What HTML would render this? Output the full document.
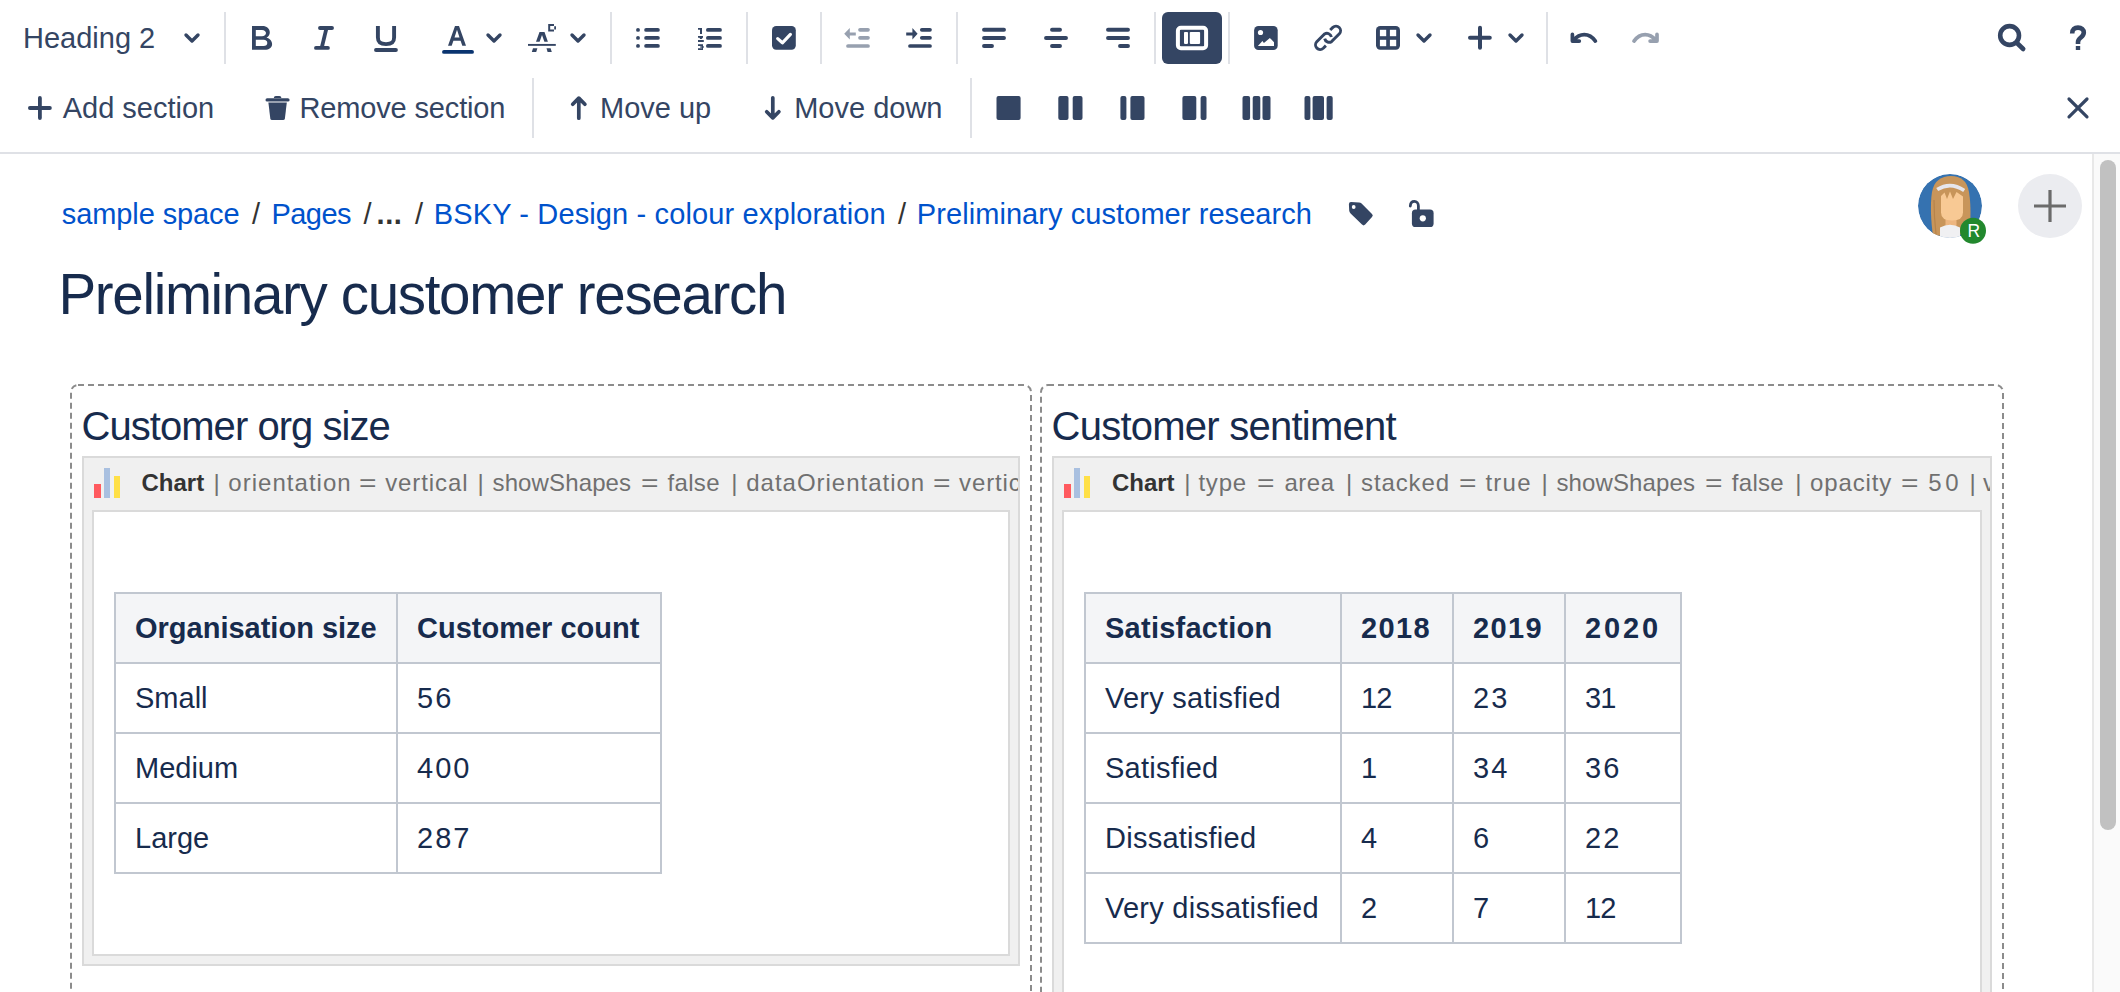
<!DOCTYPE html>
<html><head><meta charset="utf-8"><style>
html,body{margin:0;padding:0;background:#fff;}
body{width:2120px;height:992px;overflow:hidden;position:relative;font-family:"Liberation Sans", sans-serif;}
.t{position:absolute;white-space:nowrap;}
.r{position:absolute;}
</style></head><body>
<div class="t" style="left:23px;top:23.55px;font-size:29px;line-height:29px;color:#344563;font-weight:400;letter-spacing:0px;">Heading 2</div><div class="r" style="left:224px;top:12px;width:2px;height:52px;background:#DFE1E6;"></div><div class="r" style="left:610px;top:12px;width:2px;height:52px;background:#DFE1E6;"></div><div class="r" style="left:746px;top:12px;width:2px;height:52px;background:#DFE1E6;"></div><div class="r" style="left:820px;top:12px;width:2px;height:52px;background:#DFE1E6;"></div><div class="r" style="left:956px;top:12px;width:2px;height:52px;background:#DFE1E6;"></div><div class="r" style="left:1154px;top:12px;width:2px;height:52px;background:#DFE1E6;"></div><div class="r" style="left:1228px;top:12px;width:2px;height:52px;background:#DFE1E6;"></div><div class="r" style="left:1546px;top:12px;width:2px;height:52px;background:#DFE1E6;"></div><div class="r" style="left:532px;top:78px;width:2px;height:60px;background:#DFE1E6;"></div><div class="r" style="left:970px;top:78px;width:2px;height:60px;background:#DFE1E6;"></div><div class="r" style="left:0px;top:152px;width:2120px;height:2px;background:#DFE1E6;"></div><div class="r" style="left:1162px;top:12px;width:60px;height:52px;background:#344563;border-radius:6px"></div><svg class="r" style="left:0;top:0" width="2120" height="160" viewBox="0 0 2120 160"><path d="M186,35 L192,41 L198,35" fill="none" stroke="#344563" stroke-width="3.4" stroke-linecap="round" stroke-linejoin="round"/><path d="M488,35 L494,41 L500,35" fill="none" stroke="#344563" stroke-width="3.4" stroke-linecap="round" stroke-linejoin="round"/><path d="M572,35 L578,41 L584,35" fill="none" stroke="#344563" stroke-width="3.4" stroke-linecap="round" stroke-linejoin="round"/><path d="M1418,35 L1424,41 L1430,35" fill="none" stroke="#344563" stroke-width="3.4" stroke-linecap="round" stroke-linejoin="round"/><path d="M1510,35 L1516,41 L1522,35" fill="none" stroke="#344563" stroke-width="3.4" stroke-linecap="round" stroke-linejoin="round"/><path fill-rule="evenodd" fill="#344563" d="M252,26 H262.5 C266.6,26 269.8,28.6 269.8,32.3 C269.8,34.7 268.5,36.6 266.5,37.6 C269.8,38.6 272.1,41.2 272.1,44.2 C272.1,47.6 269,49.8 264.6,49.8 H252 Z M255.8,29.9 V36.3 H262 C264.3,36.3 266,35 266,33.1 C266,31.2 264.3,29.9 262,29.9 Z M255.8,39.8 V46 H263.6 C266,46 267.3,44.7 267.3,42.9 C267.3,41.1 266,39.8 263.6,39.8 Z"/><path d="M320,27.95 H332 M316,47.9 H327.9" stroke="#344563" stroke-width="3.9" stroke-linecap="round"/><path d="M324.2,29.5 L328.1,29.5 L324,46.5 L320.1,46.5 Z" fill="#344563"/><path d="M377.9,26 V37.5 C377.9,42.3 380.3,44.1 386,44.1 C391.7,44.1 394.1,42.3 394.1,37.5 V26" fill="none" stroke="#344563" stroke-width="3.9"/><path d="M376,50 H395.9" stroke="#344563" stroke-width="3.9" stroke-linecap="round"/><path d="M448,45.8 L455,26 L459,26 L466,45.8 L462.3,45.8 L460.6,40.8 L453.4,40.8 L451.7,45.8 Z M454.5,37.5 L459.5,37.5 L457,29.8 Z" fill="#344563" fill-rule="evenodd"/><path d="M444,51.9 H472" stroke="#0A3470" stroke-width="3.9" stroke-linecap="round"/><path d="M528,44.9 H555.8" stroke="#344563" stroke-width="1.9"/><path d="M539.5,32.1 L544.5,32.1 L547.9,41.8 L544.4,41.8 L542,35 L539.6,41.8 L536,41.8 Z" fill="#344563"/><path d="M533,48.3 L537.4,48.3 L536.2,52 L531.8,52 Z M546.5,48.3 L550.6,48.3 L551.8,52 L547.6,52 Z" fill="#344563"/><path d="M548.2,24 H554 V26 H550.2 V29.6 H554 V31.6 H548.2 Z M554.2,26.2 H556 V29.6 H554.2 Z" fill="#344563"/><circle cx="638" cy="29.9" r="1.95" fill="#344563"/><path d="M646.1,29.9 H657.9" stroke="#344563" stroke-width="3.8" stroke-linecap="round"/><path d="M707.9,29.9 H720" stroke="#344563" stroke-width="3.8" stroke-linecap="round"/><circle cx="638" cy="37.9" r="1.95" fill="#344563"/><path d="M646.1,37.9 H657.9" stroke="#344563" stroke-width="3.8" stroke-linecap="round"/><path d="M707.9,37.9 H720" stroke="#344563" stroke-width="3.8" stroke-linecap="round"/><circle cx="638" cy="45.9" r="1.95" fill="#344563"/><path d="M646.1,45.9 H657.9" stroke="#344563" stroke-width="3.8" stroke-linecap="round"/><path d="M707.9,45.9 H720" stroke="#344563" stroke-width="3.8" stroke-linecap="round"/><path d="M698,28 H702 V34 H700 V29.7 H698 Z" fill="#344563"/><path d="M698,36.1 H703 V37.6 L701.6,38.9 H700.1 L699.5,37.7 H698 Z M698,40 H703.8 V42 H698 Z" fill="#344563"/><path d="M698,44.2 H703 V45.9 H698 Z M700.3,46.2 H703.8 V47.8 H700.3 Z M702,45.5 H703 V48.5 H702 Z M698,48.2 H703 V50 H698 Z" fill="#344563"/><rect x="772" y="26" width="23.8" height="23.8" rx="4.2" fill="#344563"/><path d="M777.7,38.6 L782.4,42.8 L790.4,34.4" fill="none" stroke="#fff" stroke-width="3.2" stroke-linecap="round" stroke-linejoin="round"/><path d="M844.2,33.8 L849.8,28 V32.4 H855.8 V35.6 H849.8 V39.6 Z" fill="#97A0AF"/><path d="M860,29.8 H868" stroke="#97A0AF" stroke-width="3.7" stroke-linecap="round"/><path d="M860,37.8 H868" stroke="#97A0AF" stroke-width="3.7" stroke-linecap="round"/><path d="M848,46 H868" stroke="#97A0AF" stroke-width="3.7" stroke-linecap="round"/><path d="M917.6,33.8 L912.4,28 V32.4 H906.2 V35.6 H912.4 V39.6 Z" fill="#344563"/><path d="M921.8,29.8 H930" stroke="#344563" stroke-width="3.7" stroke-linecap="round"/><path d="M921.8,37.8 H930" stroke="#344563" stroke-width="3.7" stroke-linecap="round"/><path d="M910,46 H930" stroke="#344563" stroke-width="3.7" stroke-linecap="round"/><path d="M984,29.8 H1004" stroke="#344563" stroke-width="3.9" stroke-linecap="round"/><path d="M984,38 H1004" stroke="#344563" stroke-width="3.9" stroke-linecap="round"/><path d="M984,46 H992" stroke="#344563" stroke-width="3.9" stroke-linecap="round"/><path d="M1052,29.8 H1060" stroke="#344563" stroke-width="3.9" stroke-linecap="round"/><path d="M1046,38 H1066" stroke="#344563" stroke-width="3.9" stroke-linecap="round"/><path d="M1052,46 H1060" stroke="#344563" stroke-width="3.9" stroke-linecap="round"/><path d="M1108,29.8 H1128" stroke="#344563" stroke-width="3.9" stroke-linecap="round"/><path d="M1108,38 H1128" stroke="#344563" stroke-width="3.9" stroke-linecap="round"/><path d="M1120,46 H1128" stroke="#344563" stroke-width="3.9" stroke-linecap="round"/><rect x="1177.9" y="27.8" width="28.2" height="20.4" rx="3" fill="none" stroke="#fff" stroke-width="4"/><rect x="1184" y="31.9" width="4" height="12" rx="0.8" fill="#fff"/><rect x="1189.8" y="31.9" width="10.3" height="12" rx="0.8" fill="#fff"/><rect x="1254.1" y="26.1" width="23.6" height="23.9" rx="4.3" fill="#344563"/><circle cx="1260.5" cy="32.5" r="2.6" fill="#fff"/><path d="M1257.9,46 L1262.4,41.1 L1263.9,43 L1269.9,38 L1274,42.2 V46 Z" fill="#fff"/><path d="M1330.2,30 L1332.85,27.35 A4.6,4.6 0 0 1 1339.35,33.85 L1331.55,41.65 A4.6,4.6 0 0 1 1324.7,38.6" fill="none" stroke="#344563" stroke-width="2.9"/><path d="M1325.9,45.6 L1323.25,48.25 A4.6,4.6 0 0 1 1316.75,41.75 L1324.55,33.95 A4.6,4.6 0 0 1 1331.4,37" fill="none" stroke="#344563" stroke-width="2.9"/><rect x="1376" y="26" width="24" height="23.8" rx="4.2" fill="#344563"/><rect x="1379.9" y="29.8" width="6.3" height="6.4" fill="#fff"/><rect x="1389.9" y="29.8" width="6.3" height="6.4" fill="#fff"/><rect x="1379.9" y="39.8" width="6.3" height="6.4" fill="#fff"/><rect x="1389.9" y="39.8" width="6.3" height="6.4" fill="#fff"/><path d="M1480,27.8 V47.7 M1470,37.8 H1489.8" stroke="#344563" stroke-width="4" stroke-linecap="round"/><path d="M1572.4,34.4 V41.1 H1579.3 M1573.6,40.3 C1576.8,36.4 1580,34.6 1584.2,34.6 C1588.6,34.6 1592.4,36.8 1595.4,41.1" fill="none" stroke="#344563" stroke-width="3.7" stroke-linecap="round" stroke-linejoin="round"/><path d="M1657,34.4 V41.1 H1650.1 M1655.8,40.3 C1652.6,36.4 1649.4,34.6 1645.2,34.6 C1640.8,34.6 1637,36.8 1634,41.1" fill="none" stroke="#97A0AF" stroke-width="3.7" stroke-linecap="round" stroke-linejoin="round"/><circle cx="2009.6" cy="35.5" r="9.4" fill="none" stroke="#344563" stroke-width="4.6"/><path d="M2017.5,43.5 L2023.2,49" stroke="#344563" stroke-width="4.6" stroke-linecap="round"/><path d="M2072.2,33.4 C2072.2,29.4 2074.5,27.6 2078,27.6 C2081.6,27.6 2083.8,29.6 2083.8,32.6 C2083.8,35.4 2082,36.6 2080.5,37.8 C2079,39 2078,40 2078,42.3 V44" fill="none" stroke="#344563" stroke-width="4.6"/><rect x="2075.8" y="46" width="4.4" height="4" fill="#344563"/><path d="M39.9,97.9 V118.1 M29.9,108 H49.9" stroke="#344563" stroke-width="3.8" stroke-linecap="round"/><path d="M267.2,99.9 H287.9" stroke="#344563" stroke-width="3.4" stroke-linecap="round"/><path d="M273.8,98 Q273.8,96 275.8,96 H279.4 Q281.4,96 281.4,98 Z" fill="#344563"/><path d="M268.4,102.4 H286.8 L284.9,118.4 Q284.7,120 283.1,120 H272.1 Q270.5,120 270.3,118.4 Z" fill="#344563"/><path d="M578.8,98.2 V118.2 M572.7,104.2 L578.8,98.1 L584.9,104.2" fill="none" stroke="#344563" stroke-width="3.7" stroke-linecap="round" stroke-linejoin="round"/><path d="M772.8,97.8 V117.8 M766.7,111.8 L772.8,117.9 L778.9,111.8" fill="none" stroke="#344563" stroke-width="3.7" stroke-linecap="round" stroke-linejoin="round"/><rect x="996.5" y="95.9" width="24.100000000000023" height="24" rx="2" fill="#344563"/><rect x="1058.3" y="95.9" width="10.200000000000045" height="24" rx="2" fill="#344563"/><rect x="1072.7" y="95.9" width="9.799999999999955" height="24" rx="2" fill="#344563"/><rect x="1120.4" y="95.9" width="6.0" height="24" rx="2" fill="#344563"/><rect x="1130.4" y="95.9" width="14.099999999999909" height="24" rx="2" fill="#344563"/><rect x="1182.4" y="95.9" width="13.899999999999864" height="24" rx="2" fill="#344563"/><rect x="1200.6" y="95.9" width="5.900000000000091" height="24" rx="2" fill="#344563"/><rect x="1242.5" y="95.9" width="7.599999999999909" height="24" rx="2" fill="#344563"/><rect x="1252.7" y="95.9" width="7.599999999999909" height="24" rx="2" fill="#344563"/><rect x="1262.5" y="95.9" width="8.0" height="24" rx="2" fill="#344563"/><rect x="1304.5" y="95.9" width="5.900000000000091" height="24" rx="2" fill="#344563"/><rect x="1312.6" y="95.9" width="11.400000000000091" height="24" rx="2" fill="#344563"/><rect x="1326.6" y="95.9" width="6.100000000000136" height="24" rx="2" fill="#344563"/><path d="M2069,99 L2087,116.8 M2087,99 L2069,116.8" stroke="#344563" stroke-width="3.2" stroke-linecap="round"/></svg><div class="t" style="left:62.7px;top:94.25px;font-size:29px;line-height:29px;color:#344563;font-weight:400;letter-spacing:0px;">Add section</div><div class="t" style="left:299.5px;top:94.25px;font-size:29px;line-height:29px;color:#344563;font-weight:400;letter-spacing:-0.15px;">Remove section</div><div class="t" style="left:600px;top:94.25px;font-size:29px;line-height:29px;color:#344563;font-weight:400;letter-spacing:0px;">Move up</div><div class="t" style="left:794.2px;top:94.25px;font-size:29px;line-height:29px;color:#344563;font-weight:400;letter-spacing:0px;">Move down</div><div class="r" style="left:2092px;top:154px;width:28px;height:838px;background:#FAFAFA;border-left:2px solid #E8E8E8;box-sizing:border-box"></div><div class="r" style="left:2100px;top:160px;width:16px;height:670px;background:#C1C1C1;border-radius:8px"></div><div class="t" style="left:61.8px;top:199.75px;font-size:29px;line-height:29px;color:#0052CC;font-weight:400;letter-spacing:-0.1px;">sample space</div><div class="t" style="left:252px;top:199.75px;font-size:29px;line-height:29px;color:#333;font-weight:400;letter-spacing:0px;">/</div><div class="t" style="left:271.6px;top:199.75px;font-size:29px;line-height:29px;color:#0052CC;font-weight:400;letter-spacing:-0.6px;">Pages</div><div class="t" style="left:363.5px;top:199.75px;font-size:29px;line-height:29px;color:#333;font-weight:400;letter-spacing:0px;">/</div><div class="t" style="left:376.5px;top:199.75px;font-size:29px;line-height:29px;color:#333;font-weight:700;letter-spacing:0.6px;">...</div><div class="t" style="left:415px;top:199.75px;font-size:29px;line-height:29px;color:#333;font-weight:400;letter-spacing:0px;">/</div><div class="t" style="left:433.8px;top:199.75px;font-size:29px;line-height:29px;color:#0052CC;font-weight:400;letter-spacing:0.13px;">BSKY - Design - colour exploration</div><div class="t" style="left:898px;top:199.75px;font-size:29px;line-height:29px;color:#333;font-weight:400;letter-spacing:0px;">/</div><div class="t" style="left:916.8px;top:199.75px;font-size:29px;line-height:29px;color:#0052CC;font-weight:400;letter-spacing:0.07px;">Preliminary customer research</div><svg class="r" style="left:0;top:160px" width="2120" height="100" viewBox="0 160 2120 100"><path d="M1351,202 L1359,202.4 Q1360.6,202.5 1361.6,203.5 L1372,213.9 Q1373.6,215.5 1372,217.1 L1365.2,224.6 Q1363.6,226.2 1362,224.6 L1350.6,213.6 Q1349.3,212.3 1349.2,210.6 L1348.9,204.2 Q1348.9,202 1351,202 Z" fill="#344563"/><circle cx="1353.7" cy="207" r="1.9" fill="#fff"/><rect x="1411.9" y="209.6" width="21.7" height="17.4" rx="3.6" fill="#344563"/><circle cx="1422.8" cy="218.3" r="3.1" fill="#fff"/><path d="M1410.3,206 C1410.5,203 1412.3,201.4 1414.4,201.4 C1416.6,201.4 1418.4,203.2 1418.4,206 V211" fill="none" stroke="#344563" stroke-width="2.8" stroke-linecap="round"/><defs><clipPath id="av"><circle cx="1950" cy="206" r="32"/></clipPath></defs><g clip-path="url(#av)"><circle cx="1950" cy="206" r="32" fill="#3572B0"/><path d="M1933,236 C1931,222 1930,205 1932,192 C1934,181 1941,176 1951,176 C1961,176 1967,181 1969,192 C1971,205 1971,220 1969,234 Z" fill="#C8955A"/><path d="M1934,200 C1934,215 1935,225 1936,234" fill="none" stroke="#B7834A" stroke-width="1.2"/><rect x="1945.5" y="216" width="11" height="10" fill="#EDB680"/><path d="M1940,239 V227.5 Q1950,222 1960,227.5 V239 Z" fill="#F0F0F2"/><path d="M1941,196 L1944.5,192.5 L1947,199 L1950,191.5 L1953,199 L1956.5,192 L1963,196.5 V212.5 Q1963,220.5 1952,220.5 Q1941,220.5 1941,212.5 Z" fill="#F8C994"/><path d="M1937.2,189.6 Q1950.5,181.2 1964.2,190.6" fill="none" stroke="#E6E6EC" stroke-width="3.6"/></g><circle cx="1973" cy="230.8" r="13" fill="#22882E"/><circle cx="2050" cy="206" r="32" fill="#EBECF0"/><path d="M2050,190 V222 M2034,206 H2066" stroke="#6B6B6B" stroke-width="3.2"/></svg><div class="t" style="left:1967.6px;top:222.69px;font-size:17.5px;line-height:17.5px;color:#fff;font-weight:400;letter-spacing:0px;">R</div><div class="t" style="left:58.5px;top:266.77px;font-size:56.5px;line-height:56.5px;color:#172B4D;font-weight:400;letter-spacing:-1.33px;">Preliminary customer research</div><svg class="r" style="left:0;top:370px" width="2092" height="622" viewBox="0 370 2092 622"><rect x="71" y="385" width="960" height="800" rx="7" fill="none" stroke="#8C8C8C" stroke-width="2" stroke-dasharray="6 4"/><rect x="1041" y="385" width="962" height="800" rx="7" fill="none" stroke="#8C8C8C" stroke-width="2" stroke-dasharray="6 4"/></svg><div class="t" style="left:81.5px;top:406.14px;font-size:40px;line-height:40px;color:#172B4D;font-weight:400;letter-spacing:-0.95px;">Customer org size</div><div class="t" style="left:1051.5px;top:406.14px;font-size:40px;line-height:40px;color:#172B4D;font-weight:400;letter-spacing:-0.75px;">Customer sentiment</div><div class="r" style="left:82px;top:456px;width:938px;height:510px;background:#F0F0F0;border:2px solid #DADADA;box-sizing:border-box;overflow:hidden"><div class="r" style="left:9.5px;top:25.899999999999977px;width:7px;height:14px;background:#FF5A5F"></div><div class="r" style="left:19.5px;top:9.699999999999989px;width:6.5px;height:30.2px;background:#A9C0E0"></div><div class="r" style="left:29.8px;top:17.80000000000001px;width:6.5px;height:22.1px;background:#FFE047"></div><div class="t" style="left:57.5px;top:13.48px;font-size:24px;line-height:24px;color:#333;font-weight:700;letter-spacing:0px;">Chart</div><div class="t" style="left:129.5px;top:13.48px;font-size:24px;line-height:24px;color:#707070;font-weight:400;letter-spacing:0px;">|</div><div class="t" style="left:144.3px;top:13.48px;font-size:24px;line-height:24px;color:#707070;font-weight:400;letter-spacing:1.03px;">orientation</div><div class="t" style="left:274.5px;top:13.48px;font-size:24px;line-height:24px;color:#707070;font-weight:400;letter-spacing:0px;transform:scaleX(1.25);transform-origin:0 0;">=</div><div class="t" style="left:301.2px;top:13.48px;font-size:24px;line-height:24px;color:#707070;font-weight:400;letter-spacing:0.9px;">vertical</div><div class="t" style="left:393.6px;top:13.48px;font-size:24px;line-height:24px;color:#707070;font-weight:400;letter-spacing:0px;">|</div><div class="t" style="left:408.5px;top:13.48px;font-size:24px;line-height:24px;color:#707070;font-weight:400;letter-spacing:0.13px;">showShapes</div><div class="t" style="left:556.7px;top:13.48px;font-size:24px;line-height:24px;color:#707070;font-weight:400;letter-spacing:0px;transform:scaleX(1.25);transform-origin:0 0;">=</div><div class="t" style="left:583.6px;top:13.48px;font-size:24px;line-height:24px;color:#707070;font-weight:400;letter-spacing:0.3px;">false</div><div class="t" style="left:647.3px;top:13.48px;font-size:24px;line-height:24px;color:#707070;font-weight:400;letter-spacing:0px;">|</div><div class="t" style="left:662.3px;top:13.48px;font-size:24px;line-height:24px;color:#707070;font-weight:400;letter-spacing:0.98px;">dataOrientation</div><div class="t" style="left:848.5px;top:13.48px;font-size:24px;line-height:24px;color:#707070;font-weight:400;letter-spacing:0px;transform:scaleX(1.25);transform-origin:0 0;">=</div><div class="t" style="left:875px;top:13.48px;font-size:24px;line-height:24px;color:#707070;font-weight:400;letter-spacing:0.9px;">vertical</div><div class="r" style="left:8px;top:52px;width:918px;height:446px;background:#fff;border:2px solid #DADADA;box-sizing:border-box"></div></div><div class="r" style="left:1052px;top:456px;width:940px;height:944px;background:#F0F0F0;border:2px solid #DADADA;box-sizing:border-box;overflow:hidden"><div class="r" style="left:9.599999999999909px;top:25.899999999999977px;width:7px;height:14px;background:#FF5A5F"></div><div class="r" style="left:19.59999999999991px;top:9.699999999999989px;width:6.5px;height:30.2px;background:#A9C0E0"></div><div class="r" style="left:29.89999999999991px;top:17.80000000000001px;width:6.5px;height:22.1px;background:#FFE047"></div><div class="t" style="left:57.90000000000009px;top:13.48px;font-size:24px;line-height:24px;color:#333;font-weight:700;letter-spacing:0px;">Chart</div><div class="t" style="left:130.20000000000005px;top:13.48px;font-size:24px;line-height:24px;color:#707070;font-weight:400;letter-spacing:0px;">|</div><div class="t" style="left:144.4000000000001px;top:13.48px;font-size:24px;line-height:24px;color:#707070;font-weight:400;letter-spacing:0.8px;">type</div><div class="t" style="left:202.79999999999995px;top:13.48px;font-size:24px;line-height:24px;color:#707070;font-weight:400;letter-spacing:0px;transform:scaleX(1.25);transform-origin:0 0;">=</div><div class="t" style="left:230.5px;top:13.48px;font-size:24px;line-height:24px;color:#707070;font-weight:400;letter-spacing:0.5px;">area</div><div class="t" style="left:292px;top:13.48px;font-size:24px;line-height:24px;color:#707070;font-weight:400;letter-spacing:0px;">|</div><div class="t" style="left:307px;top:13.48px;font-size:24px;line-height:24px;color:#707070;font-weight:400;letter-spacing:0.88px;">stacked</div><div class="t" style="left:404.79999999999995px;top:13.48px;font-size:24px;line-height:24px;color:#707070;font-weight:400;letter-spacing:0px;transform:scaleX(1.25);transform-origin:0 0;">=</div><div class="t" style="left:431.4000000000001px;top:13.48px;font-size:24px;line-height:24px;color:#707070;font-weight:400;letter-spacing:1.27px;">true</div><div class="t" style="left:487.5999999999999px;top:13.48px;font-size:24px;line-height:24px;color:#707070;font-weight:400;letter-spacing:0px;">|</div><div class="t" style="left:502.4000000000001px;top:13.48px;font-size:24px;line-height:24px;color:#707070;font-weight:400;letter-spacing:0.13px;">showShapes</div><div class="t" style="left:650.5999999999999px;top:13.48px;font-size:24px;line-height:24px;color:#707070;font-weight:400;letter-spacing:0px;transform:scaleX(1.25);transform-origin:0 0;">=</div><div class="t" style="left:677.8px;top:13.48px;font-size:24px;line-height:24px;color:#707070;font-weight:400;letter-spacing:0.3px;">false</div><div class="t" style="left:741.2px;top:13.48px;font-size:24px;line-height:24px;color:#707070;font-weight:400;letter-spacing:0px;">|</div><div class="t" style="left:756px;top:13.48px;font-size:24px;line-height:24px;color:#707070;font-weight:400;letter-spacing:0.88px;">opacity</div><div class="t" style="left:846.5px;top:13.48px;font-size:24px;line-height:24px;color:#707070;font-weight:400;letter-spacing:0px;transform:scaleX(1.25);transform-origin:0 0;">=</div><div class="t" style="left:874.3px;top:13.48px;font-size:24px;line-height:24px;color:#707070;font-weight:400;letter-spacing:3.5px;">50</div><div class="t" style="left:915.5px;top:13.48px;font-size:24px;line-height:24px;color:#707070;font-weight:400;letter-spacing:0px;">|</div><div class="t" style="left:929px;top:13.48px;font-size:24px;line-height:24px;color:#707070;font-weight:400;letter-spacing:0.9px;">vertical</div><div class="r" style="left:8px;top:52px;width:920px;height:880px;background:#fff;border:2px solid #DADADA;box-sizing:border-box"></div></div><div class="r" style="left:114px;top:592px;width:548px;height:70px;background:#F4F5F7;"></div><div class="r" style="left:114px;top:592px;width:548px;height:2px;background:#C1C7D0;"></div><div class="r" style="left:114px;top:662px;width:548px;height:2px;background:#C1C7D0;"></div><div class="r" style="left:114px;top:732px;width:548px;height:2px;background:#C1C7D0;"></div><div class="r" style="left:114px;top:802px;width:548px;height:2px;background:#C1C7D0;"></div><div class="r" style="left:114px;top:872px;width:548px;height:2px;background:#C1C7D0;"></div><div class="r" style="left:114px;top:592px;width:2px;height:282px;background:#C1C7D0;"></div><div class="r" style="left:396px;top:592px;width:2px;height:282px;background:#C1C7D0;"></div><div class="r" style="left:660px;top:592px;width:2px;height:282px;background:#C1C7D0;"></div><div class="t" style="left:135px;top:613.65px;font-size:29px;line-height:29px;color:#172B4D;font-weight:700;letter-spacing:0px;">Organisation size</div><div class="t" style="left:417px;top:613.65px;font-size:29px;line-height:29px;color:#172B4D;font-weight:700;letter-spacing:0px;">Customer count</div><div class="t" style="left:135px;top:683.65px;font-size:29px;line-height:29px;color:#172B4D;font-weight:400;letter-spacing:0px;">Small</div><div class="t" style="left:417px;top:683.65px;font-size:29px;line-height:29px;color:#172B4D;font-weight:400;letter-spacing:2.0px;">56</div><div class="t" style="left:135px;top:753.65px;font-size:29px;line-height:29px;color:#172B4D;font-weight:400;letter-spacing:0px;">Medium</div><div class="t" style="left:417px;top:753.65px;font-size:29px;line-height:29px;color:#172B4D;font-weight:400;letter-spacing:2.0px;">400</div><div class="t" style="left:135px;top:823.65px;font-size:29px;line-height:29px;color:#172B4D;font-weight:400;letter-spacing:0px;">Large</div><div class="t" style="left:417px;top:823.65px;font-size:29px;line-height:29px;color:#172B4D;font-weight:400;letter-spacing:2.0px;">287</div><div class="r" style="left:1084px;top:592px;width:598px;height:70px;background:#F4F5F7;"></div><div class="r" style="left:1084px;top:592px;width:598px;height:2px;background:#C1C7D0;"></div><div class="r" style="left:1084px;top:662px;width:598px;height:2px;background:#C1C7D0;"></div><div class="r" style="left:1084px;top:732px;width:598px;height:2px;background:#C1C7D0;"></div><div class="r" style="left:1084px;top:802px;width:598px;height:2px;background:#C1C7D0;"></div><div class="r" style="left:1084px;top:872px;width:598px;height:2px;background:#C1C7D0;"></div><div class="r" style="left:1084px;top:942px;width:598px;height:2px;background:#C1C7D0;"></div><div class="r" style="left:1084px;top:592px;width:2px;height:352px;background:#C1C7D0;"></div><div class="r" style="left:1340px;top:592px;width:2px;height:352px;background:#C1C7D0;"></div><div class="r" style="left:1452px;top:592px;width:2px;height:352px;background:#C1C7D0;"></div><div class="r" style="left:1564px;top:592px;width:2px;height:352px;background:#C1C7D0;"></div><div class="r" style="left:1680px;top:592px;width:2px;height:352px;background:#C1C7D0;"></div><div class="t" style="left:1105px;top:613.65px;font-size:29px;line-height:29px;color:#172B4D;font-weight:700;letter-spacing:0.25px;">Satisfaction</div><div class="t" style="left:1361px;top:613.65px;font-size:29px;line-height:29px;color:#172B4D;font-weight:700;letter-spacing:1.4px;">2018</div><div class="t" style="left:1473px;top:613.65px;font-size:29px;line-height:29px;color:#172B4D;font-weight:700;letter-spacing:1.4px;">2019</div><div class="t" style="left:1585px;top:613.65px;font-size:29px;line-height:29px;color:#172B4D;font-weight:700;letter-spacing:2.9px;">2020</div><div class="t" style="left:1105px;top:683.65px;font-size:29px;line-height:29px;color:#172B4D;font-weight:400;letter-spacing:0.25px;">Very satisfied</div><div class="t" style="left:1361px;top:683.65px;font-size:29px;line-height:29px;color:#172B4D;font-weight:400;letter-spacing:-1.0px;">12</div><div class="t" style="left:1473px;top:683.65px;font-size:29px;line-height:29px;color:#172B4D;font-weight:400;letter-spacing:2.0px;">23</div><div class="t" style="left:1585px;top:683.65px;font-size:29px;line-height:29px;color:#172B4D;font-weight:400;letter-spacing:-1.0px;">31</div><div class="t" style="left:1105px;top:753.65px;font-size:29px;line-height:29px;color:#172B4D;font-weight:400;letter-spacing:0.25px;">Satisfied</div><div class="t" style="left:1361px;top:753.65px;font-size:29px;line-height:29px;color:#172B4D;font-weight:400;letter-spacing:-1.0px;">1</div><div class="t" style="left:1473px;top:753.65px;font-size:29px;line-height:29px;color:#172B4D;font-weight:400;letter-spacing:2.0px;">34</div><div class="t" style="left:1585px;top:753.65px;font-size:29px;line-height:29px;color:#172B4D;font-weight:400;letter-spacing:2.0px;">36</div><div class="t" style="left:1105px;top:823.65px;font-size:29px;line-height:29px;color:#172B4D;font-weight:400;letter-spacing:0.25px;">Dissatisfied</div><div class="t" style="left:1361px;top:823.65px;font-size:29px;line-height:29px;color:#172B4D;font-weight:400;letter-spacing:2.0px;">4</div><div class="t" style="left:1473px;top:823.65px;font-size:29px;line-height:29px;color:#172B4D;font-weight:400;letter-spacing:2.0px;">6</div><div class="t" style="left:1585px;top:823.65px;font-size:29px;line-height:29px;color:#172B4D;font-weight:400;letter-spacing:2.0px;">22</div><div class="t" style="left:1105px;top:893.65px;font-size:29px;line-height:29px;color:#172B4D;font-weight:400;letter-spacing:0.25px;">Very dissatisfied</div><div class="t" style="left:1361px;top:893.65px;font-size:29px;line-height:29px;color:#172B4D;font-weight:400;letter-spacing:2.0px;">2</div><div class="t" style="left:1473px;top:893.65px;font-size:29px;line-height:29px;color:#172B4D;font-weight:400;letter-spacing:2.0px;">7</div><div class="t" style="left:1585px;top:893.65px;font-size:29px;line-height:29px;color:#172B4D;font-weight:400;letter-spacing:-1.0px;">12</div>
</body></html>
